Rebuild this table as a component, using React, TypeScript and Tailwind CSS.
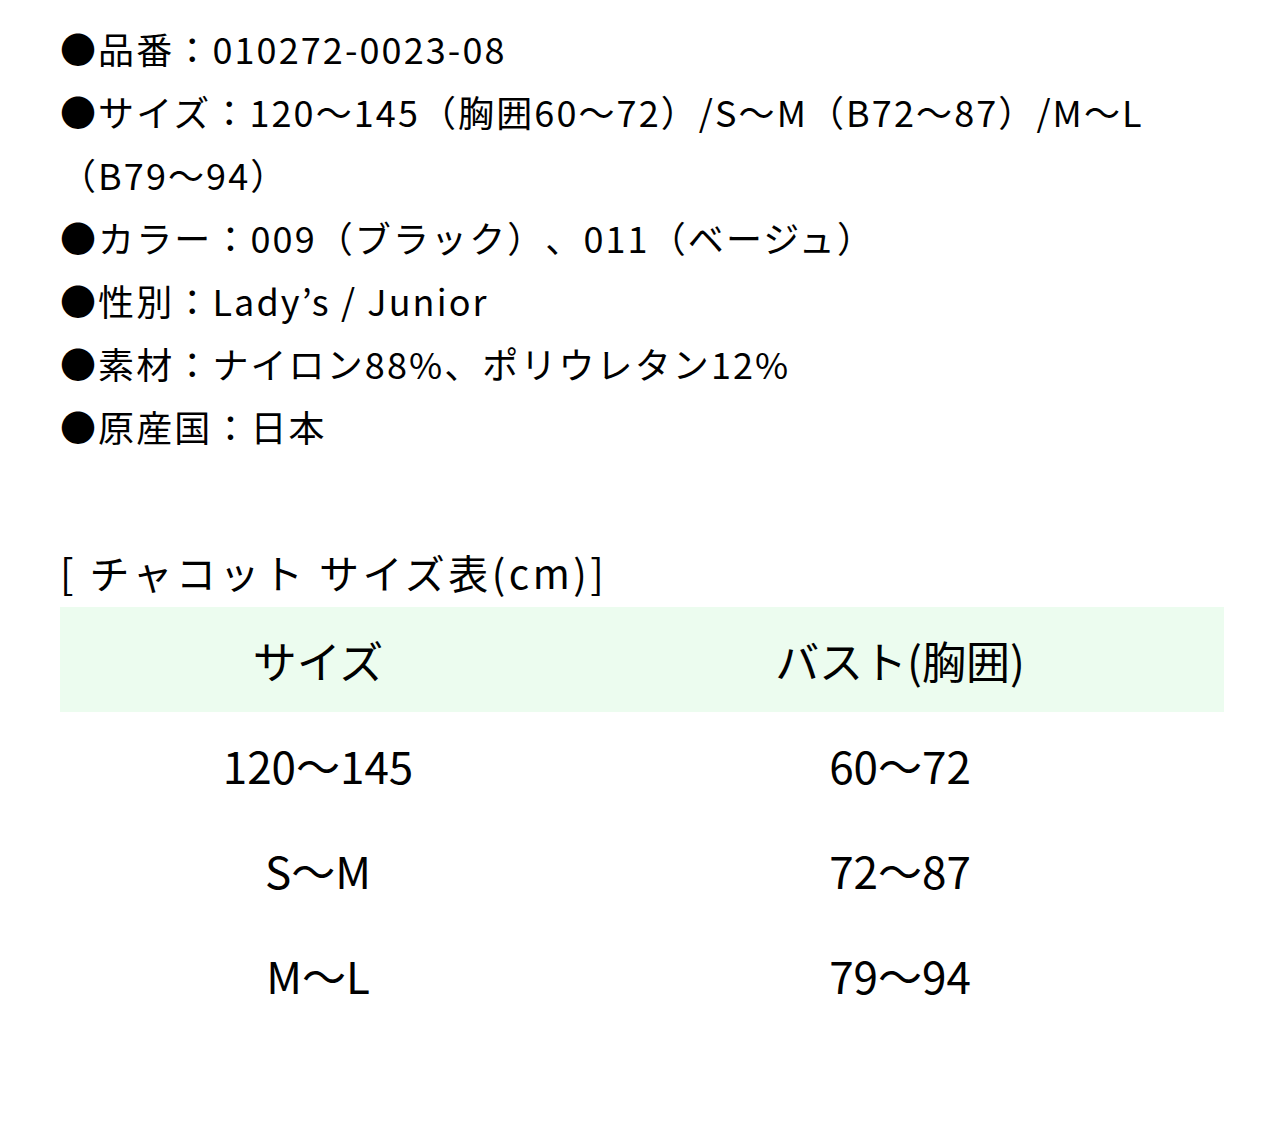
import React from "react";

const rows = [
  ["120〜145", "60〜72"],
  ["S〜M", "72〜87"],
  ["M〜L", "79〜94"],
];

export default function App() {
  return (
    <div
      className="w-[1284px] min-h-[1139px] bg-white text-black px-[60px] pt-[17px] [text-spacing-trim:space-all]"
      style={{ fontFamily: '"Noto Sans CJK JP", "Noto Sans", sans-serif' }}
    >
      <div className="text-[36px] leading-[63px] tracking-[2.1px]">
        <p>●品番：010272-0023-08</p>
        <p>
          ●サイズ：120〜145（胸囲60〜72）/S〜M（B72〜87）/M〜L
          <br />
          （B79〜94）
        </p>
        <p>●カラー：009（ブラック）、011（ベージュ）</p>
        <p>●性別：Lady’s / Junior</p>
        <p>●素材：ナイロン88%、ポリウレタン12%</p>
        <p>●原産国：日本</p>
      </div>

      <h2 className="mt-[79px] text-[40px] leading-[70px] tracking-[3.5px] font-normal">
        [ チャコット サイズ表(cm)]
      </h2>

      <table className="w-[1164px] border-collapse text-[44px] font-normal">
        <thead>
          <tr className="bg-[#ecfcef]">
            <th className="w-[516px] h-[105px] font-normal text-center align-middle">サイズ</th>
            <th className="h-[105px] font-normal text-center align-middle">バスト(胸囲)</th>
          </tr>
        </thead>
        <tbody>
          {rows.map((r) => (
            <tr key={r[0]}>
              <td className="h-[105px] text-center align-middle">{r[0]}</td>
              <td className="h-[105px] text-center align-middle">{r[1]}</td>
            </tr>
          ))}
        </tbody>
      </table>
    </div>
  );
}
